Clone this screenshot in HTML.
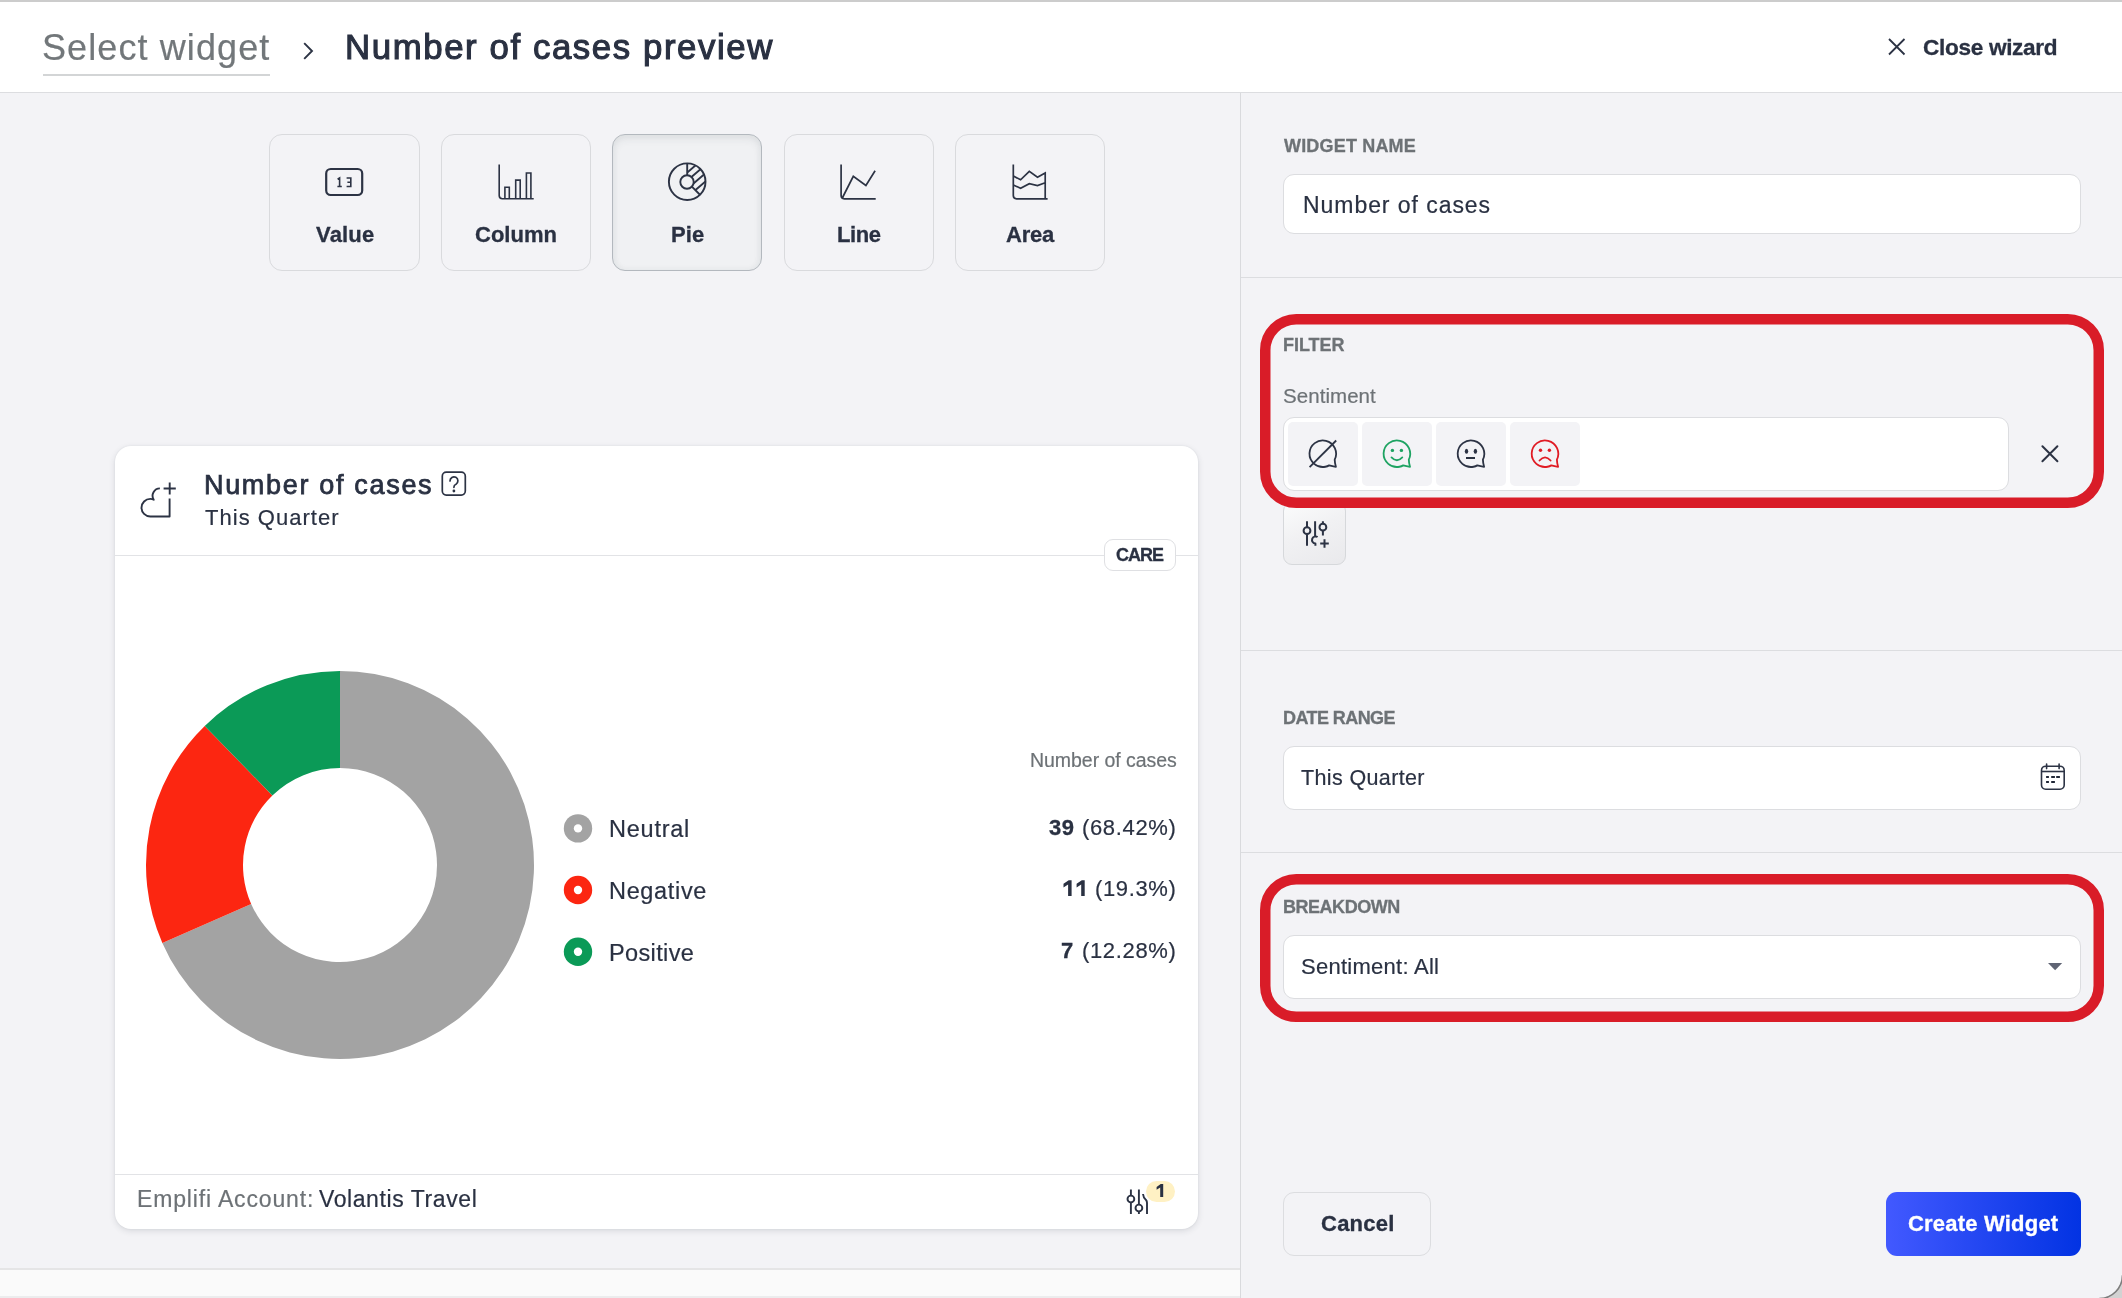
<!DOCTYPE html>
<html>
<head>
<meta charset="utf-8">
<title>Number of cases preview</title>
<style>
*{box-sizing:border-box;margin:0;padding:0}
html,body{width:2122px;height:1298px;overflow:hidden;background:#f3f3f6}
body{font-family:"Liberation Sans",sans-serif;color:#2a3142;position:relative}
.abs{position:absolute}
.t{position:absolute;white-space:nowrap;line-height:1;will-change:transform;-webkit-text-stroke:0.2px}
.b{font-weight:bold;-webkit-text-stroke:0.3px}
.m{-webkit-text-stroke:1.1px}
#t_ctitle{-webkit-text-stroke:0.75px}
svg{position:absolute;overflow:visible}
/* header */
#topline{left:0;top:0;width:2122px;height:2px;background:#cccccc}
#header{left:0;top:2px;width:2122px;height:91px;background:#fff;border-bottom:1px solid #dcdde0}
/* panels */
#vdiv{left:1240px;top:93px;width:1px;height:1205px;background:#d9dadd}
.hdiv{left:1241px;width:881px;height:1px;background:#dcdde0}
/* tabs */
.tab{top:134px;width:151px;height:137px;border:1px solid #d9dadd;border-radius:13px;background:#f3f3f6}
.tab.sel{border-color:#b3b8be;background:#f0f1f3;box-shadow:inset 0 4px 9px rgba(40,50,65,.075),inset 0 0 7px rgba(40,50,65,.05)}
/* card */
#card{left:115px;top:446px;width:1083px;height:783px;background:#fff;border-radius:16px;box-shadow:0 2px 6px rgba(40,45,60,.13),0 0 2px rgba(40,45,60,.08)}
.cdiv{left:115px;width:1083px;height:1px;background:#e2e3e6}
/* inputs */
.inp{background:#fff;border:1px solid #dcdde0;border-radius:11px}
.sbtn{top:422px;width:70px;height:64px;background:#f3f3f6;border-radius:5px}
.red{border:11px solid #d91c28;border-radius:38px}
</style>
</head>
<body>
<div class="abs" id="header"></div>
<div class="abs" id="topline"></div>
<div class="abs" id="vdiv"></div>

<!-- bottom strip of left panel -->
<div class="abs" style="left:0;top:1268px;width:1240px;height:2px;background:#e5e5e6"></div>
<div class="abs" style="left:0;top:1270px;width:1240px;height:26px;background:#fafafa"></div>
<div class="abs" style="left:0;top:1296px;width:1240px;height:2px;background:#ececed"></div>

<!-- tabs -->
<div class="abs tab" style="left:269px"></div>
<div class="abs tab" style="left:441px;width:150px"></div>
<div class="abs tab sel" style="left:612px;width:150px"></div>
<div class="abs tab" style="left:784px;width:150px"></div>
<div class="abs tab" style="left:955px;width:150px"></div>

<!-- card -->
<div class="abs" id="card"></div>
<div class="abs cdiv" style="top:555px"></div>
<div class="abs cdiv" style="top:1174px"></div>

<!-- right panel -->
<div class="abs hdiv" style="top:277px"></div>
<div class="abs hdiv" style="top:650px"></div>
<div class="abs hdiv" style="top:852px"></div>

<div class="abs inp" style="left:1283px;top:174px;width:798px;height:60px"></div>
<div class="abs inp" style="left:1283px;top:417px;width:726px;height:74px"></div>
<div class="abs sbtn" style="left:1287.5px"></div>
<div class="abs sbtn" style="left:1362px"></div>
<div class="abs sbtn" style="left:1436px"></div>
<div class="abs sbtn" style="left:1510px"></div>
<div class="abs" style="left:1283px;top:502px;width:63px;height:63px;border:1px solid #d6d8db;border-radius:9px;background:linear-gradient(155deg,#fbfcfc,#f1f1f3 45%,#e9e9ec)"></div>
<svg style="left:1260px;top:314px" width="844" height="194"><rect x="5.25" y="5.25" width="833.5" height="183.5" rx="31" fill="none" stroke="#d91c28" stroke-width="10.5"/></svg>

<div class="abs inp" style="left:1283px;top:746px;width:798px;height:64px"></div>
<div class="abs inp" style="left:1283px;top:935px;width:798px;height:64px"></div>
<svg style="left:1260px;top:874px" width="844" height="148"><rect x="5.25" y="5.25" width="833.5" height="137.5" rx="31" fill="none" stroke="#d91c28" stroke-width="10.5"/></svg>

<div class="abs" style="left:1283px;top:1192px;width:148px;height:64px;border:1px solid #dcdde0;border-radius:11px;background:#f3f3f6"></div>
<div class="abs" style="left:1886px;top:1192px;width:195px;height:64px;border-radius:11px;background:linear-gradient(90deg,#4259ff,#0233e3)"></div>

<svg style="left:2092px;top:1268px" width="30" height="30" viewBox="0 0 30 30"><defs><filter id="cb" x="-50%" y="-50%" width="200%" height="200%"><feGaussianBlur stdDeviation="0.7"/></filter></defs><path d="M30 7.3A22.7 22.7 0 0 1 7.3 30L30 30Z" fill="#d2d2d2"/><path d="M30.5 7.3A23.2 23.2 0 0 1 7.3 30.5" fill="none" stroke="#7d7d7d" stroke-width="1.6" filter="url(#cb)"/></svg>
<!--CHART-->
<svg style="left:0;top:0" width="1240" height="1298" viewBox="0 0 1240 1298" shape-rendering="geometricPrecision">
<path d="M340.00 671.00A194 194 0 1 1 162.34 942.93L251.17 903.96A97 97 0 1 0 340.00 768.00Z" fill="#a3a3a3"/>
<path d="M162.34 942.93A194 194 0 0 1 204.72 725.94L272.36 795.47A97 97 0 0 0 251.17 903.96Z" fill="#fc2611"/>
<path d="M204.72 725.94A194 194 0 0 1 340.00 671.00L340.00 768.00A97 97 0 0 0 272.36 795.47Z" fill="#0b9a57"/>
<circle cx="578" cy="828.4" r="14.2" fill="#a3a3a3"/><circle cx="578" cy="828.4" r="4.2" fill="#fff"/>
<circle cx="578" cy="890.0" r="14.2" fill="#fc2611"/><circle cx="578" cy="890.0" r="4.2" fill="#fff"/>
<circle cx="578" cy="951.8" r="14.2" fill="#0b9a57"/><circle cx="578" cy="951.8" r="4.2" fill="#fff"/>
</svg>
<div class="abs" style="left:43px;top:74px;width:227px;height:2px;background:#d3d5d6"></div>
<div class="abs" style="left:1104px;top:539px;width:72px;height:32px;background:#fff;border:1px solid #dfe0e3;border-radius:9px"></div>
<div class="abs" style="left:1144px;top:1179px;width:33px;height:25px;border-radius:13px;background:#fff"></div>
<div class="abs" style="left:1146px;top:1181px;width:29px;height:21px;border-radius:11px;background:#fff1c4"></div>
<!--/CHART-->
<!--TEXT-->
<div class="t" id="t_sel" style="left:41.80px;top:29.53px;font-size:36px;letter-spacing:1.096px;color:#72777a">Select widget</div>
<div class="t m" id="t_title" style="left:344.50px;top:29.54px;font-size:34.8px;letter-spacing:1.580px;color:#2a3142">Number of cases preview</div>
<div class="t b" id="t_close" style="left:1922.90px;top:36.87px;font-size:22.6px;letter-spacing:-0.318px;color:#2a3142">Close wizard</div>
<div class="t b" id="t_value" style="left:315.70px;top:224.38px;font-size:22px;letter-spacing:0.175px;color:#2a3142">Value</div>
<div class="t b" id="t_column" style="left:475.00px;top:224.38px;font-size:22px;letter-spacing:0.000px;color:#2a3142">Column</div>
<div class="t b" id="t_pie" style="left:671.00px;top:224.38px;font-size:22px;letter-spacing:0.050px;color:#2a3142">Pie</div>
<div class="t b" id="t_line" style="left:836.50px;top:224.38px;font-size:22px;letter-spacing:-0.417px;color:#2a3142">Line</div>
<div class="t b" id="t_area" style="left:1006.00px;top:224.38px;font-size:22px;letter-spacing:-0.250px;color:#2a3142">Area</div>
<div class="t b" id="t_wname" style="left:1283.70px;top:136.76px;font-size:18px;letter-spacing:0.180px;color:#6d7276">WIDGET NAME</div>
<div class="t" id="t_inp1" style="left:1303.00px;top:193.53px;font-size:23px;letter-spacing:0.946px;color:#2a3142">Number of cases</div>
<div class="t b" id="t_filter" style="left:1282.70px;top:335.76px;font-size:18px;letter-spacing:-0.030px;color:#6d7276">FILTER</div>
<div class="t" id="t_sent" style="left:1282.70px;top:385.65px;font-size:20.5px;letter-spacing:0.056px;color:#6d7276">Sentiment</div>
<div class="t b" id="t_drange" style="left:1282.70px;top:708.76px;font-size:18px;letter-spacing:-0.572px;color:#6d7276">DATE RANGE</div>
<div class="t" id="t_tq" style="left:1301.10px;top:767.80px;font-size:21.5px;letter-spacing:0.364px;color:#2a3142">This Quarter</div>
<div class="t b" id="t_bd" style="left:1282.70px;top:897.76px;font-size:18px;letter-spacing:-0.475px;color:#6d7276">BREAKDOWN</div>
<div class="t" id="t_sall" style="left:1300.90px;top:956.38px;font-size:22px;letter-spacing:0.269px;color:#2a3142">Sentiment: All</div>
<div class="t b" id="t_cancel" style="left:1320.50px;top:1213.38px;font-size:22px;letter-spacing:0.250px;color:#2a3142">Cancel</div>
<div class="t b" id="t_create" style="left:1908.10px;top:1213.38px;font-size:22px;letter-spacing:0.204px;color:#ffffff">Create Widget</div>
<div class="t m" id="t_ctitle" style="left:203.70px;top:472.14px;font-size:27px;letter-spacing:1.679px;color:#2a3142">Number of cases</div>
<div class="t" id="t_csub" style="left:205.20px;top:506.88px;font-size:22px;letter-spacing:1.032px;color:#2a3142">This Quarter</div>
<div class="t b" id="t_care" style="left:1116.00px;top:545.76px;font-size:18px;letter-spacing:-0.967px;color:#2a3142">CARE</div>
<div class="t" id="t_lh" style="left:1029.50px;top:751.49px;font-size:19.5px;letter-spacing:-0.043px;color:#6d7276">Number of cases</div>
<div class="t" id="t_neu" style="left:609.20px;top:818.11px;font-size:23.5px;letter-spacing:0.758px;color:#2a3142">Neutral</div>
<div class="t" id="t_neg" style="left:609.20px;top:880.11px;font-size:23.5px;letter-spacing:0.664px;color:#2a3142">Negative</div>
<div class="t" id="t_pos" style="left:609.20px;top:942.11px;font-size:23.5px;letter-spacing:0.364px;color:#2a3142">Positive</div>
<div class="t b" id="t_v1n" style="left:1049.00px;top:817.38px;font-size:22px;letter-spacing:0.500px;color:#2a3142">39</div>
<div class="t" id="t_v1p" style="left:1082.40px;top:817.38px;font-size:22px;letter-spacing:0.650px;color:#2a3142">(68.42%)</div>
<div class="t" id="t_v2p" style="left:1095.40px;top:878.38px;font-size:22px;letter-spacing:0.633px;color:#2a3142">(19.3%)</div>
<div class="t b" id="t_v3n" style="left:1060.80px;top:940.38px;font-size:22px;letter-spacing:2.950px;color:#2a3142">7</div>
<div class="t" id="t_v3p" style="left:1082.40px;top:940.38px;font-size:22px;letter-spacing:0.650px;color:#2a3142">(12.28%)</div>
<div class="t" id="t_emp" style="left:136.50px;top:1187.53px;font-size:23px;letter-spacing:0.850px;color:#6d7276">Emplifi Account:</div>
<div class="t" id="t_vol" style="left:318.80px;top:1187.53px;font-size:23px;letter-spacing:0.586px;color:#2a3142">Volantis Travel</div>
<!--/TEXT-->
<!--ICONS-->
<svg style="left:0;top:0" width="2122" height="1298" viewBox="0 0 2122 1298" fill="none" stroke="#2c3344" stroke-width="1.8" stroke-linecap="round" stroke-linejoin="round">
<defs>
<clipPath id="pieclip"><path d="M687.2 163.5A18.3 18.3 0 0 1 700.14 194.74L691.94 186.54A6.7 6.7 0 0 0 687.2 175.1Z"/></clipPath>
</defs>
<!-- header -->
<path d="M304.2 43.2L312 51L304.2 58.8" stroke-width="1.9" stroke-linecap="butt" stroke-linejoin="miter"/>
<path d="M1889 39L1904.5 54.5M1904.5 39L1889 54.5" stroke-width="1.8" stroke-linecap="butt"/>
<!-- value icon -->
<rect x="326.2" y="169" width="36" height="26" rx="4.5" stroke-width="2.2"/>
<path d="M337.6 179.2L339.6 178L339.6 186.4M337.4 186.5L341.8 186.5M346.6 178L350.8 178L350.8 186.5L346.6 186.5M347.4 182.2L350.8 182.2" stroke-width="1.6" stroke-linecap="butt" stroke-linejoin="miter"/>
<!-- column icon -->
<g stroke-width="1.6" stroke-linecap="butt" stroke-linejoin="miter">
<path d="M499.2 164.5L499.2 195.6Q499.2 198.8 502.4 198.8L533.7 198.8"/>
<path d="M504.9 198.8L504.9 187.2L509.3 187.2L509.3 198.8M515.7 198.8L515.7 180.1L520.2 180.1L520.2 198.8M526.4 198.8L526.4 173L530.9 173L530.9 198.8"/>
</g>
<!-- pie icon -->
<g stroke-width="1.9" stroke-linecap="butt">
<circle cx="687.2" cy="181.7" r="18.3"/>
<circle cx="687" cy="182" r="6.7"/>
<path d="M687.2 163.4L687.2 175.3M691.9 186.7L700.2 195"/>
<g clip-path="url(#pieclip)"><path d="M681.6 177.3L699.8 161.7M687.9 180.0L706.1 164.4M690.6 186.0L708.8 170.4M691.4 193.5L709.6 177.9"/></g>
</g>
<!-- line icon -->
<g stroke-width="1.7" stroke-linecap="butt" stroke-linejoin="miter">
<path d="M841.1 164.5L841.1 195.6Q841.1 198.8 844.3 198.8L875.7 198.8"/>
<path d="M842.3 198L853.3 176.3L865.9 185.5L875.1 170.8"/>
</g>
<!-- area icon -->
<g stroke-width="1.7" stroke-linecap="butt" stroke-linejoin="miter">
<path d="M1013.3 164.5L1013.3 195.6Q1013.3 198.8 1016.5 198.8L1047.6 198.8"/>
<path d="M1013.3 176L1020.6 179.8L1029.3 171.4L1037.5 177.2L1045.2 173L1045.2 198.8M1013.3 184.9L1020.6 188.3L1029.3 183.7L1037.5 185.5L1045.2 182.8"/>
</g>
<!-- cloud plus -->
<g stroke-width="1.9" stroke-linecap="butt">
<path d="M169.6 498.4L169.6 516.5L150.3 516.5A8.8 8.8 0 0 1 150.3 498.9Q152.2 498.9 153.7 499.7A7.4 7.4 0 0 1 159.9 488.4"/>
<path d="M163.6 488.5L175.8 488.5M169.7 482.5L169.7 494.6"/>
</g>
<!-- help box -->
<g stroke-width="1.7">
<rect x="442.3" y="472.2" width="23" height="22.9" rx="4"/>
<path d="M450 480.9A3.95 3.95 0 1 1 456 484.2Q453.9 485 453.9 487.3"/>
<circle cx="453.9" cy="491" r="1.4" fill="#2c3344" stroke="none"/>
</g>
<!-- sentiment icons -->
<g transform="translate(1322.8 453.7)"><path d="M11.9 5.9A13.3 13.3 0 1 0 2.5 13.05Q4.6 12.7 6.3 11.7Q9.5 12.7 13.1 13.1Q12 9.5 11.9 5.9Z"/><path d="M13.4 -13.2L-13.2 13.5" stroke-linecap="butt"/></g>
<g transform="translate(1396.9 453.7)" stroke="#1ea362"><path d="M11.9 5.9A13.3 13.3 0 1 0 2.5 13.05Q4.6 12.7 6.3 11.7Q9.5 12.7 13.1 13.1Q12 9.5 11.9 5.9Z"/><circle cx="-4.5" cy="-3.3" r="1.7" fill="#1ea362" stroke="none"/><circle cx="4.5" cy="-3.3" r="1.7" fill="#1ea362" stroke="none"/><path d="M-5.4 3.7Q0 9.4 5.4 3.7"/></g>
<g transform="translate(1471 453.7)"><path d="M11.9 5.9A13.3 13.3 0 1 0 2.5 13.05Q4.6 12.7 6.3 11.7Q9.5 12.7 13.1 13.1Q12 9.5 11.9 5.9Z"/><ellipse cx="-4.5" cy="-2.4" rx="1.7" ry="2.5" fill="#2c3344" stroke="none"/><ellipse cx="4.4" cy="-2.4" rx="1.7" ry="2.5" fill="#2c3344" stroke="none"/><path d="M-5 4.3L4 4.3" stroke-width="1.9" stroke-linecap="butt" stroke="#1f2636"/></g>
<g transform="translate(1545 453.7)" stroke="#e01b24"><path d="M11.9 5.9A13.3 13.3 0 1 0 2.5 13.05Q4.6 12.7 6.3 11.7Q9.5 12.7 13.1 13.1Q12 9.5 11.9 5.9Z"/><circle cx="-4.5" cy="-3.4" r="1.7" fill="#e01b24" stroke="none"/><circle cx="4.4" cy="-3.4" r="1.7" fill="#e01b24" stroke="none"/><path d="M-5.5 6.8Q0 0.4 5.6 6.8"/></g>
<!-- remove filter X -->
<path d="M2042.4 446.2L2057.4 461.2M2057.4 446.2L2042.4 461.2" stroke-width="2"/>
<!-- add filter icon -->
<g stroke-width="2" stroke-linecap="butt">
<path d="M1307 521.3L1307 527.2M1307 534.2L1307 545.8M1315.1 521.3L1315.1 536.6M1322.9 521.3L1322.9 523.8M1322.9 530.7L1322.9 535.6"/>
<circle cx="1307" cy="530.7" r="3.4"/><circle cx="1322.9" cy="527.2" r="3.4"/>
<path d="M1317.6 537A3.6 3.6 0 1 0 1315.4 543.6L1315.4 545.8"/>
<path d="M1320.2 543.5L1328.8 543.5M1324.5 539.3L1324.5 547.8"/>
</g>
<!-- calendar -->
<g stroke-width="1.6">
<rect x="2041.5" y="766.2" width="22.7" height="23" rx="4.2"/>
<path d="M2041.5 771.5L2064.2 771.5" stroke-linecap="butt"/>
<path d="M2046.6 764L2046.6 768.6M2059.1 764L2059.1 768.6"/>
<path d="M2046.1 776.9L2048.9 776.9M2051.2 776.9L2054.9 776.9M2056.2 776.9L2059.9 776.9M2046.1 782L2048.9 782M2051.2 782L2054.9 782" stroke-width="2" stroke-linecap="butt" stroke="#1f2636"/>
</g>
<!-- dropdown triangle -->
<path d="M2048 963L2062.2 963L2055.1 970.2Z" fill="#5f6474" stroke="none"/>
<!-- ones --><path fill="#2a3142" stroke="none" d="M1163.2 1184.0L1163.2 1197.0L1160.2 1197.0L1160.2 1187.5L1156.6 1189.8L1156.6 1186.9L1160.7 1184.0ZM1071.6 880.3L1071.6 896.0L1068.1 896.0L1068.1 884.5L1063.5 887.4L1063.5 883.8L1068.7 880.3ZM1084.7 880.3L1084.7 896.0L1081.2 896.0L1081.2 884.5L1076.6 887.4L1076.6 883.8L1081.8 880.3Z"/>
<!-- footer filter icon -->
<g stroke-width="1.9" stroke-linecap="butt">
<path d="M1130.9 1189.6L1130.9 1195.6M1130.9 1202.4L1130.9 1213.9M1138.9 1189.6L1138.9 1204.6M1138.9 1211.4L1138.9 1213.9"/>
<circle cx="1130.9" cy="1199" r="3.4"/><circle cx="1138.9" cy="1208" r="3.4"/>
<path d="M1143 1194Q1143.4 1198 1146 1200Q1147 1201 1147 1203L1147 1213.9"/>
</g>
</svg>
<!--/ICONS-->
</body>
</html>
